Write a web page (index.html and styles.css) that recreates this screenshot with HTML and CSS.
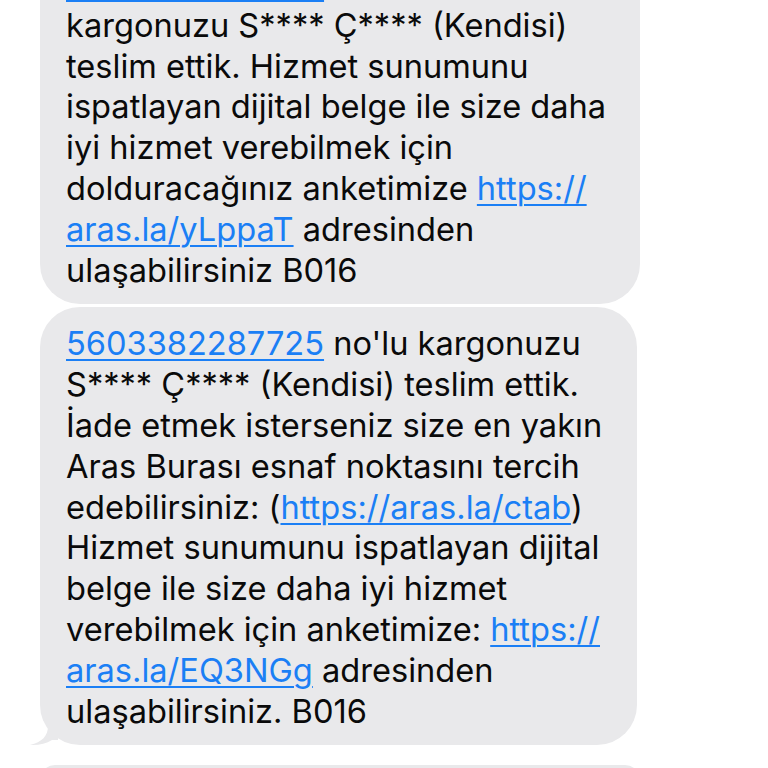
FILE: index.html
```html
<!DOCTYPE html>
<html lang="tr">
<head>
<meta charset="utf-8">
<link rel="stylesheet" href="styles.css">
</head>
<body>
<div class="thread">
  <div class="bubble b1">
    <a class="link">5603382287725</a> no'lu<br>
    kargonuzu S**** Ç**** (Kendisi)<br>
    teslim ettik. Hizmet sunumunu<br>
    ispatlayan dijital belge ile size daha<br>
    iyi hizmet verebilmek için<br>
    dolduracağınız anketimize <a class="link">https://</a><br>
    <a class="link">aras.la/yLppaT</a> adresinden<br>
    ulaşabilirsiniz B016
  </div>
  <div class="bubble b2">
    <a class="link">5603382287725</a> no'lu kargonuzu<br>
    S**** Ç**** (Kendisi) teslim ettik.<br>
    İade etmek isterseniz size en yakın<br>
    Aras Burası esnaf noktasını tercih<br>
    edebilirsiniz: (<a class="link">https://aras.la/ctab</a>)<br>
    Hizmet sunumunu ispatlayan dijital<br>
    belge ile size daha iyi hizmet<br>
    verebilmek için anketimize: <a class="link">https://</a><br>
    <a class="link">aras.la/EQ3NGg</a> adresinden<br>
    ulaşabilirsiniz. B016
    <svg class="tail" width="30" height="30" viewBox="0 0 30 30"><path d="M20 0 L20 10 C20 20 14 26 2 29 C10 29.5 18 28 24 24 L30 24 L30 0 Z" fill="#e9e9eb"/></svg>
  </div>
  <div class="bubble b3"></div>
</div>
</body>
</html>
```
FILE: styles.css
```css
html, body {
  margin: 0;
  padding: 0;
  background: #ffffff;
  overflow: hidden;
  height: 768px;
}
.thread {
  display: flex;
  flex-direction: column;
  align-items: flex-start;
  padding-left: 40px;
  margin-top: -52px;
}
.bubble {
  position: relative;
  box-sizing: border-box;
  background: #e9e9eb;
  border-radius: 40px;
  padding: 16px 26px 14px 26px;
  font-family: Inter, "Noto Sans", sans-serif;
  font-size: 32.6px;
  line-height: 40.8px;
  color: #0a0a0a;
  white-space: nowrap;
  letter-spacing: 0;
}
.b1 { width: 600px; }
.b2 { width: 597px; margin-top: 3px; }
.b3 { width: 600px; margin-top: 20px; height: 30px; padding: 0; }
.link {
  color: #1b7ff5;
  text-decoration: underline;
  text-decoration-thickness: 2px;
  text-underline-offset: 4px;
}
.tail {
  position: absolute;
  left: -12px;
  bottom: -1px;
}
```
